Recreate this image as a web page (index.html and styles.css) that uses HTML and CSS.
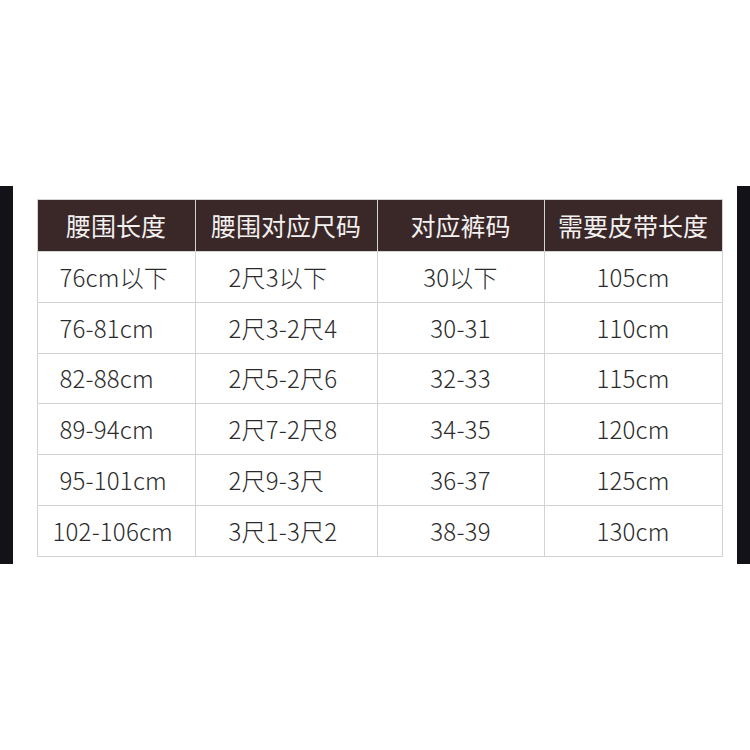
FILE: index.html
```html
<!DOCTYPE html>
<html lang="zh">
<head>
<meta charset="utf-8">
<link rel="stylesheet" href="styles.css">
</head>
<body>
<div class="stage">
  <div class="bar"></div>
  <table class="size-table">
    <colgroup>
      <col class="c1"><col class="c2"><col class="c3"><col class="c4">
    </colgroup>
    <thead>
      <tr><th>腰围长度</th><th>腰围对应尺码</th><th>对应裤码</th><th>需要皮带长度</th></tr>
    </thead>
    <tbody>
      <tr><td class="waist">76cm以下</td><td class="chi">2尺3以下</td><td>30以下</td><td>105cm</td></tr>
      <tr><td class="waist">76-81cm</td><td class="chi">2尺3-2尺4</td><td>30-31</td><td>110cm</td></tr>
      <tr><td class="waist">82-88cm</td><td class="chi">2尺5-2尺6</td><td>32-33</td><td>115cm</td></tr>
      <tr><td class="waist">89-94cm</td><td class="chi">2尺7-2尺8</td><td>34-35</td><td>120cm</td></tr>
      <tr><td class="waist">95-101cm</td><td class="chi">2尺9-3尺</td><td>36-37</td><td>125cm</td></tr>
      <tr><td class="waist wide">102-106cm</td><td class="chi">3尺1-3尺2</td><td>38-39</td><td>130cm</td></tr>
    </tbody>
  </table>
  <div class="bar"></div>
</div>
</body>
</html>
```
FILE: styles.css
```css
html, body {
  margin: 0;
  padding: 0;
  background: #ffffff;
}
body {
  width: 750px;
  height: 750px;
  font-family: "Noto Sans CJK SC", "Noto Sans", sans-serif;
}
.stage {
  display: flex;
  justify-content: space-between;
  align-items: flex-start;
  padding-top: 186px;
}
.bar {
  width: 13px;
  height: 378px;
  background: #131219;
}
.bar:last-child {
  width: 14px;
}
.size-table {
  margin-top: 13px;
  margin-left: 24px;
  margin-right: 14px;
  width: 685px;
  border-collapse: collapse;
  table-layout: fixed;
}
.c1 { width: 158px; }
.c2 { width: 182px; }
.c3 { width: 167px; }
.c4 { width: 178px; }
th, td {
  border: 1px solid #d3d3d3;
  padding: 0;
  text-align: center;
  white-space: nowrap;
}
th {
  height: 51px;
  background: #3a2728;
  color: #f3f0f0;
  font-size: 25px;
  font-weight: 400;
  line-height: 1;
}
td {
  height: 49.8px;
  color: #2b2b2b;
  font-size: 24px;
  font-weight: 300;
  letter-spacing: 0.2px;
  line-height: 1;
}
td.waist {
  text-align: left;
  padding-left: 22px;
}
td.waist.wide {
  padding-left: 15px;
}
td.chi {
  text-align: left;
  padding-left: 33px;
}
```
